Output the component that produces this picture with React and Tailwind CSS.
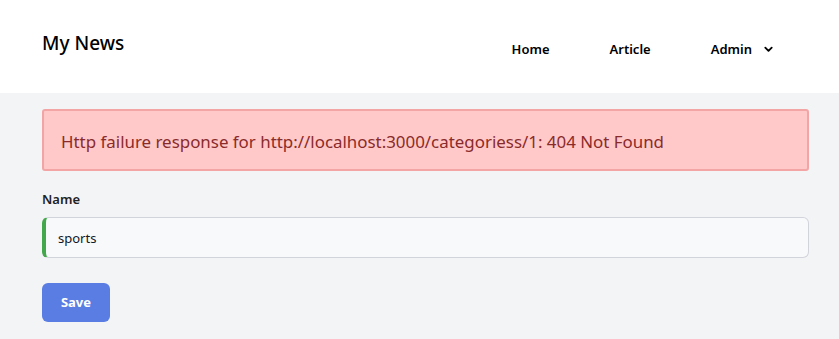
import React, { useState } from 'react';

const Chevron = () => (
  <svg width="11" height="11" viewBox="0 0 24 24" fill="none" stroke="currentColor" strokeWidth="4" strokeLinecap="round" strokeLinejoin="round">
    <path d="M5 8l7 7 7-7" />
  </svg>
);

const App = () => {
  const [name, setName] = useState('sports');

  return (
    <div className="min-h-screen bg-[#f3f4f6] font-['Noto_Sans',sans-serif] text-[#111827]">
      <header className="h-[93px] bg-white flex justify-between pl-[42px] pr-[65px]">
        <h1 className="pt-[29px] text-[19px] font-medium text-black leading-[28px]">My News</h1>
        <nav className="flex items-start gap-[60px] pt-[39px] text-[13px] font-semibold text-black leading-[20px]">
          <a href="#" className="block">Home</a>
          <a href="#" className="block">Article</a>
          <button className="flex items-center gap-[11px] font-semibold">
            Admin <Chevron />
          </button>
        </nav>
      </header>

      <main className="pl-[42px] pr-[30px] pt-[16px] pb-[17px]">
        <div className="h-[62px] flex items-center px-[17px] pt-[3px] bg-[#ffc9c9] border-2 border-[#f3a5a5] rounded-[3px] text-[16.9px] text-[#8a2b2b]">
          Http failure response for http://localhost:3000/categoriess/1: 404 Not Found
        </div>

        <label className="block mt-[19px] text-[13px] font-semibold text-[#222] leading-[18px]">Name</label>
        <input
          value={name}
          onChange={(e) => setName(e.target.value)}
          className="mt-[9px] block w-full h-[41px] pl-[12px] pr-3 text-[13px] text-[#111827] bg-[#f8f9fb] border border-[#d1d5db] border-l-4 border-l-[#43a84b] rounded-[6px] outline-none"
        />

        <button className="mt-[25px] w-[68px] h-[39px] bg-[#5a7de3] text-white text-[13px] font-bold rounded-[6px]">
          Save
        </button>
      </main>
    </div>
  );
};

export default App;
